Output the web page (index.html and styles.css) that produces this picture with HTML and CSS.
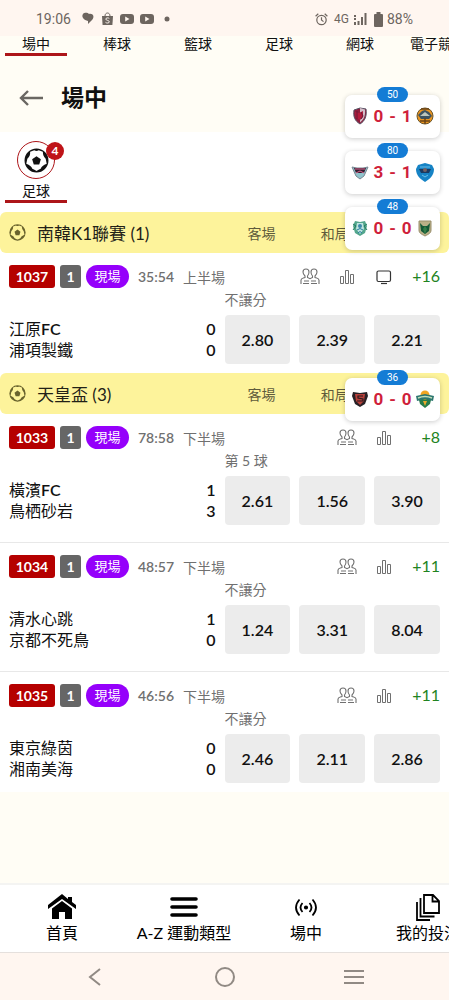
FILE: index.html
```html
<!DOCTYPE html>
<html lang="zh-Hant">
<head>
    <meta charset="UTF-8">
    <meta name="viewport" content="width=device-width, initial-scale=1">
    <title>場中</title>
    <link rel="stylesheet" href="styles.css">
</head>
<body>
    <svg class="sprite" aria-hidden="true">
        <symbol id="ball" viewBox="0 0 24 24">
            <path fill-rule="evenodd" d="M12 .5a11.500 11.500 0 1 0 0 23a11.500 11.500 0 1 0 0-23zM12 22q-2-1-4-2-1-3-5.800-4.800l1-5q3-2 2.700-6.500l4-1.500q2 1.500 4.200 0l4 1.500q0 4.500 2.700 6.500l1 5Q17 17 16 20q-2 1-4 2z" fill="currentColor"/>
            <path d="M12 7.800l4.200 3-1.600 5H9.400l-1.600-5z" fill="currentColor"/>
        </symbol>
        <symbol id="people" viewBox="0 0 20 17">
            <g fill="none" stroke="currentColor" stroke-width="1.1">
                <path d="M1 16v-4c0-1.500 1.500-1.700 4-2.500V8C3.500 6.500 3 5 3 4c0-4 6-4 6 0 0 1-.2 2.500-1.500 4v1.500L10 10.700l2.500-1.200V8C11.200 6.500 11 5 11 4c0-4 6-4 6 0 0 1-.5 2.500-2 4v1.500c2.500.8 4 1 4 2.500v4"/>
                <path d="M4 13h5M11 13h5M3 15.500h6M11 15.500h6"/>
            </g>
        </symbol>
        <symbol id="bars" viewBox="0 0 16 16">
            <path d="M1.500 7.500h3v7h-3zM6.500 1.500h3v13h-3zM11.500 5.500h3v9h-3z" fill="none" stroke="currentColor" stroke-width="1"/>
        </symbol>
        <symbol id="tv" viewBox="0 0 16 16">
            <rect x="1" y="2" width="13.500" height="10.500" rx="1.500" fill="none" stroke="currentColor" stroke-width="1.2"/>
            <path d="M5 14.500h6" stroke="currentColor" stroke-width="1.200"/>
        </symbol>
        <symbol id="youtube" viewBox="0 0 14 12">
            <rect y="1" width="14" height="10" rx="3" fill="#6d655f"/>
            <path d="M5.200 3.500v5L9.500 6z" fill="#fff6f0"/>
        </symbol>
    </svg>

    <div class="app">
        <div class="status-bar">
            <div class="status-group">
                <span class="clock">19:06</span>
                <svg width="14" height="14" viewBox="0 0 14 14" fill="#6d655f"><path d="M2 2c2-2 5-1 6 0 4-1 6 3 3 6l-4 4 0-3C3 8 0 5 2 2z"/></svg>
                <svg width="13" height="14" viewBox="0 0 13 14"><path d="M1 4h11l-.6 9H1.600z" fill="#6d655f"/><path d="M4 4c0-4 5-4 5 0" fill="none" stroke="#6d655f"/><path d="M8.300 6.500c-1-1-3.500-.8-3.500.6 0 1.600 3.500 1 3.500 2.700 0 1.500-2.700 1.600-3.800.5" fill="none" stroke="#fff6f0"/></svg>
                <svg width="14" height="12"><use href="#youtube"/></svg>
                <svg width="14" height="12"><use href="#youtube"/></svg>
                <svg width="13" height="6" viewBox="0 0 13 6"><circle cx="7" cy="3" r="2.500" fill="#6d655f"/></svg>
            </div>
            <div class="status-group status-right">
                <svg width="13" height="13" viewBox="0 0 13 13" fill="none" stroke="#6d655f" stroke-width="1.200"><circle cx="6.500" cy="7" r="4.700"/><path d="M6.500 4.200V7l2 1.600M.6 3.200L3.300.8M12.400 3.200L9.700.8"/></svg>
                <span class="network">4G</span>
                <svg class="signal" width="14" height="12" viewBox="0 0 14 12" fill="#6d655f"><path d="M1 2h2v2H1zM1 5h2v2H1zM1 9h2v3H1zM4.500 8h2v4h-2zM8 4h2v8H8zM11.500 0h2v12h-2z"/></svg>
                <svg width="9" height="15" viewBox="0 0 9 15" fill="#6d655f"><path d="M2.500 0h4v2H8q1 0 1 1v11q0 1-1 1H1q-1 0-1-1V3q0-1 1-1h1.500z"/></svg>
                <span class="battery">88%</span>
            </div>
        </div>

        <nav class="sport-tabs">
            <a href="#" class="sport-tab active">場中</a>
            <a href="#" class="sport-tab">棒球</a>
            <a href="#" class="sport-tab">籃球</a>
            <a href="#" class="sport-tab">足球</a>
            <a href="#" class="sport-tab">網球</a>
            <a href="#" class="sport-tab long">電子競技</a>
        </nav>

        <header class="page-header">
            <button class="back-button" aria-label="返回">
                <svg width="24" height="16" viewBox="0 0 24 16" fill="none" stroke="#6a6762" stroke-width="2.400"><path d="M9 1L2 8l7 7M2 8h22"/></svg>
            </button>
            <h1>場中</h1>
        </header>

        <main>
            <div class="filter-bar">
                <a href="#" class="filter-item">
                    <span class="filter-icon">
                        <svg width="25" height="25"><use href="#ball"/></svg>
                        <span class="filter-badge">4</span>
                    </span>
                    <span>足球</span>
                </a>
            </div>

            <section class="league">
                <div class="league-header">
                    <h2><svg width="17" height="17"><use href="#ball"/></svg>南韓K1聯賽 (1)</h2>
                    <div class="league-columns"><span>客場</span><span>和局</span></div>
                </div>
                <article class="match">
                    <div class="match-info">
                        <span class="code">1037</span>
                        <span class="code count">1</span>
                        <span class="live">現場</span>
                        <span class="time">35:54</span>
                        <span class="half">上半場</span>
                        <div class="match-tools">
                            <button aria-label="對戰"><svg width="20" height="17"><use href="#people"/></svg></button>
                            <button aria-label="統計"><svg width="16" height="16"><use href="#bars"/></svg></button>
                            <button class="tv" aria-label="直播"><svg width="16" height="16"><use href="#tv"/></svg></button>
                            <a href="#" class="more">+16</a>
                        </div>
                    </div>
                    <div class="market">不讓分</div>
                    <div class="match-body">
                        <div class="teams">
                            <div class="team"><span>江原<b>FC</b></span><b>0</b></div>
                            <div class="team"><span>浦項製鐵</span><b>0</b></div>
                        </div>
                        <div class="odds"><button>2.80</button><button>2.39</button><button>2.21</button></div>
                    </div>
                </article>
            </section>

            <section class="league">
                <div class="league-header">
                    <h2><svg width="17" height="17"><use href="#ball"/></svg>天皇盃 (3)</h2>
                    <div class="league-columns"><span>客場</span><span>和局</span></div>
                </div>
                <article class="match">
                    <div class="match-info">
                        <span class="code">1033</span>
                        <span class="code count">1</span>
                        <span class="live">現場</span>
                        <span class="time">78:58</span>
                        <span class="half">下半場</span>
                        <div class="match-tools">
                            <button aria-label="對戰"><svg width="20" height="17"><use href="#people"/></svg></button>
                            <button aria-label="統計"><svg width="16" height="16"><use href="#bars"/></svg></button>
                            <a href="#" class="more">+8</a>
                        </div>
                    </div>
                    <div class="market">第 5 球</div>
                    <div class="match-body">
                        <div class="teams">
                            <div class="team"><span>橫濱<b>FC</b></span><b>1</b></div>
                            <div class="team"><span>鳥栖砂岩</span><b>3</b></div>
                        </div>
                        <div class="odds"><button>2.61</button><button>1.56</button><button>3.90</button></div>
                    </div>
                </article>
                <article class="match">
                    <div class="match-info">
                        <span class="code">1034</span>
                        <span class="code count">1</span>
                        <span class="live">現場</span>
                        <span class="time">48:57</span>
                        <span class="half">下半場</span>
                        <div class="match-tools">
                            <button aria-label="對戰"><svg width="20" height="17"><use href="#people"/></svg></button>
                            <button aria-label="統計"><svg width="16" height="16"><use href="#bars"/></svg></button>
                            <a href="#" class="more">+11</a>
                        </div>
                    </div>
                    <div class="market">不讓分</div>
                    <div class="match-body">
                        <div class="teams">
                            <div class="team"><span>清水心跳</span><b>1</b></div>
                            <div class="team"><span>京都不死鳥</span><b>0</b></div>
                        </div>
                        <div class="odds"><button>1.24</button><button>3.31</button><button>8.04</button></div>
                    </div>
                </article>
                <article class="match">
                    <div class="match-info">
                        <span class="code">1035</span>
                        <span class="code count">1</span>
                        <span class="live">現場</span>
                        <span class="time">46:56</span>
                        <span class="half">下半場</span>
                        <div class="match-tools">
                            <button aria-label="對戰"><svg width="20" height="17"><use href="#people"/></svg></button>
                            <button aria-label="統計"><svg width="16" height="16"><use href="#bars"/></svg></button>
                            <a href="#" class="more">+11</a>
                        </div>
                    </div>
                    <div class="market">不讓分</div>
                    <div class="match-body">
                        <div class="teams">
                            <div class="team"><span>東京綠茵</span><b>0</b></div>
                            <div class="team"><span>湘南美海</span><b>0</b></div>
                        </div>
                        <div class="odds"><button>2.46</button><button>2.11</button><button>2.86</button></div>
                    </div>
                </article>
            </section>
        </main>

        <nav class="bottom-nav">
            <a href="#">
                <svg width="28" height="26" viewBox="0 0 28 26"><path d="M14 0L0 11v4l14-10 14 10v-4l-4-3V3h-4v2z"/><path d="M14 7L4 14.500V25h7v-7h6v7h7V14.500z"/></svg>
                <span>首頁</span>
            </a>
            <a href="#">
                <svg width="28" height="26" viewBox="0 0 28 26" stroke="#000" stroke-width="3.600" stroke-linecap="round"><path d="M2 5h24M2 13h24M2 21h24"/></svg>
                <span>A-Z 運動類型</span>
            </a>
            <a href="#">
                <svg width="28" height="26" viewBox="0 0 28 26" fill="none" stroke="#000" stroke-width="1.800"><circle cx="14" cy="13.500" r="1.200" fill="#000"/><path d="M10.500 9q-4 4.500 0 9M17.500 9q4 4.500 0 9M7.500 5.500q-7 8 0 16M20.500 5.500q7 8 0 16"/></svg>
                <span>場中</span>
            </a>
            <a href="#">
                <svg width="28" height="28" viewBox="0 0 28 28" fill="none" stroke="#000" stroke-width="1.800"><path d="M10 2h9l6 6v12H10zM18.500 2v6.500H25M6.500 5v18.500h14M3 9v18h13"/></svg>
                <span>我的投注</span>
            </a>
        </nav>

        <div class="system-nav">
            <button aria-label="返回"><svg width="24" height="20" viewBox="0 0 24 20" fill="none" stroke="#918a84" stroke-width="2"><path d="M16 2l-10 8 10 8"/></svg></button>
            <button aria-label="主畫面"><svg width="20" height="20" viewBox="0 0 20 20" fill="none" stroke="#918a84" stroke-width="2"><circle cx="10" cy="10" r="9"/></svg></button>
            <button aria-label="最近使用"><svg width="20" height="18" viewBox="0 0 20 18" stroke="#918a84" stroke-width="2"><path d="M0 3h20M0 9h20M0 15h20"/></svg></button>
        </div>

        <!-- 浮動比分 -->
        <aside class="score-overlay">
            <div class="score-card">
                <span class="minute">50</span>
                <svg width="18" height="18" viewBox="0 0 18 18"><path d="M3 3l6-2 6 1c1 7-1 12-6 15C4 14 2 10 3 3z" fill="#8e1e3d" stroke="#555365"/><path d="M9 1l5 1.500c.5 6-1 10-5 13z" fill="#d2bec9"/><path d="M4 5l4 1 4-2v6l-3 3-4-2z" fill="#b51c3c"/><path d="M6 4v8M10 5l2 4-2 3" stroke="#6b1837" fill="none"/></svg>
                <span class="score"><b>0</b><b>-</b><b>1</b></span>
                <svg width="18" height="18" viewBox="0 0 18 18"><circle cx="9" cy="9" r="8" fill="#ec951f" stroke="#67552e"/><path d="M2 8l4-4 3-1 4 2 3 4-3 3H5z" fill="#3e5360"/><path d="M4 9l5-4 5 4z" fill="#bdc6bd"/><path d="M4 14h10M9 11v6M5 2l8 0" stroke="#694418" stroke-width="1.500"/></svg>
            </div>
            <div class="score-card">
                <span class="minute">80</span>
                <svg width="18" height="18" viewBox="0 0 18 18"><path d="M1 4l5 1h6l5-1-4 9-4 3-4-3z" fill="#8fc4cc" stroke="#7a8692"/><path d="M3 5h12l-2 5H5z" fill="#341c30"/><path d="M4 6h10M5 10l4-2 4 2" stroke="#df6b91" fill="none"/></svg>
                <span class="score"><b>3</b><b>-</b><b>1</b></span>
                <svg width="18" height="19" viewBox="0 0 18 19"><path d="M2 2l7-2 7 2 2 4c0 6-4 10-9 13C4 16 0 12 0 6z" fill="#1683c5"/><path d="M3 6h12l-2 4H5z" fill="#193a61"/><path d="M4 4h10M6 12l3 2 3-2" fill="none" stroke="#69bee9"/><circle cx="9" cy="7" r="2" fill="#735f62"/></svg>
            </div>
            <div class="score-card">
                <span class="minute">48</span>
                <svg width="18" height="18" viewBox="0 0 18 18"><path d="M4 2l5 1 5-1 2 5-2 7-5 3-5-3-2-7z" fill="#53a68c"/><path d="M6 4h6l1 6-4 5-4-5z" fill="#bfe5df"/><path d="M2 5l3 2-3 4M16 5l-3 2 3 4" stroke="#237c60" fill="none"/><circle cx="9" cy="7" r="2" fill="#3d88aa"/><path d="M6 11q3-3 6 0M7 14q2-3 4 0" stroke="#247ba0" fill="none"/></svg>
                <span class="score"><b>0</b><b>-</b><b>0</b></span>
                <svg width="18" height="18" viewBox="0 0 18 18"><path d="M3 2h12v9c0 3-2 4-6 6-4-2-6-3-6-6z" fill="#bab087" stroke="#998f6d"/><path d="M4 4l3 3h4l3-3-1 8-4 3-4-3z" fill="#155a37"/><path d="M7 10l2-3 2 3-2 5z" fill="#347e49"/></svg>
            </div>
            <div class="score-card apart">
                <span class="minute">36</span>
                <svg width="18" height="18" viewBox="0 0 18 18"><path d="M2 2l7 1 7-1 1 4-3 8-5 3-5-3L1 6z" fill="#282025"/><path d="M4 4h10l-1 7-4 4-4-4z" fill="#b8403a"/><path d="M12 6H7v2l5 1v2H6" fill="none" stroke="#28191e" stroke-width="1.200"/></svg>
                <span class="score"><b>0</b><b>-</b><b>0</b></span>
                <svg width="18" height="18" viewBox="0 0 18 18"><path d="M2 6h14l-2 8-5 4-5-4z" fill="#277b4a"/><circle cx="9" cy="5" r="4.500" fill="#f1a622"/><path d="M0 6l9-2 9 2-1 5-8-2-8 2z" fill="#2c7670"/><path d="M2 8q7-3 14 0" stroke="#c2ddb8" stroke-width="1.500" fill="none"/><path d="M7 11h4l-2 5z" fill="#e9a92b"/></svg>
            </div>
        </aside>
    </div>
</body>
</html>
```

FILE: styles.css
```css
* {
    box-sizing: border-box;
}

body {
    margin: 0;
    font-family: Lato, "Noto Sans CJK TC", sans-serif;
    font-size: 14px;
    color: #111;
    background: #fffdf5;
}

a {
    color: inherit;
    text-decoration: none;
}

button {
    padding: 0;
    border: 0;
    background: none;
    font: inherit;
    color: inherit;
}

svg {
    display: block;
    flex-shrink: 0;
}

.sprite {
    position: absolute;
    width: 0;
    height: 0;
}

.app {
    position: relative;
    display: flex;
    flex-direction: column;
    min-height: 100vh;
    overflow: hidden;
}

/* 狀態列 */
.status-bar {
    display: flex;
    justify-content: space-between;
    align-items: center;
    height: 36px;
    padding: 2px 36px 0;
    background: #fff6f0;
    color: #6d655f;
    font-family: Roboto, sans-serif;
}

.status-group {
    display: flex;
    align-items: center;
    gap: 6px;
}

.status-right {
    gap: 4px;
}

.clock,
.battery {
    font-size: 14px;
}

.clock {
    margin-right: 4px;
}

.network {
    margin-left: 2px;
    font-size: 12px;
}

.signal {
    margin-right: 3px;
}

/* 運動分頁 */
.sport-tabs {
    display: flex;
    gap: 19px;
    padding: 0 5px;
    line-height: 16px;
}

.sport-tab {
    flex: 0 0 62px;
    height: 20px;
    text-align: center;
    white-space: nowrap;
}

.sport-tab.active {
    border-bottom: 3px solid #ad1519;
}

.sport-tab.long {
    text-align: left;
}

.page-header {
    display: flex;
    align-items: center;
    gap: 18px;
    height: 76px;
    padding: 8px 19px 0;
}

.page-header h1 {
    margin: 0;
    font-size: 23px;
    line-height: 30px;
    padding-bottom: 2px;
}

main {
    flex: 1;
}

.filter-bar {
    display: flex;
    height: 80px;
    padding: 9px 5px;
    background: #fff;
}

.filter-item {
    display: flex;
    flex-direction: column;
    align-items: center;
    gap: 3px;
    width: 62px;
    height: 62px;
    border-bottom: 3px solid #ad1519;
    line-height: 18px;
}

.filter-icon {
    position: relative;
    display: flex;
    align-items: center;
    justify-content: center;
    width: 38px;
    height: 38px;
    border: 1px solid #ad1519;
    border-radius: 50%;
}

.filter-badge {
    position: absolute;
    top: 0;
    right: -10px;
    width: 18px;
    height: 18px;
    border-radius: 50%;
    background: #bf1418;
    color: #fff;
    font-size: 12px;
    font-weight: 700;
    text-align: center;
}

/* 聯賽 */
.league {
    background: #fff;
}

.league-header {
    display: flex;
    align-items: center;
    height: 41px;
    padding: 0 9px;
    border-radius: 6px;
    background: #fdf39b;
    color: #5f5b3c;
}

.league-header h2 {
    display: flex;
    align-items: center;
    gap: 11px;
    flex: 1;
    margin: 0;
    font-size: 17px;
    font-weight: 400;
    color: #222117;
    white-space: nowrap;
}

.league-header h2 svg {
    color: #69632d;
}

.league-columns {
    display: grid;
    grid-template-columns: repeat(3, 1fr);
    gap: 9px;
    width: 50%;
    padding-left: 5px;
    text-align: center;
}

.match {
    padding: 12px 9px 9px;
}

.match:not(:last-child) {
    padding-bottom: 17px;
    border-bottom: 1px solid #e8e8e8;
}

.match-info {
    display: flex;
    align-items: center;
    height: 23px;
    color: #707070;
}

.code,
.live {
    height: 23px;
    line-height: 23px;
    color: #fff;
    text-align: center;
}

.code {
    width: 46px;
    margin-right: 5px;
    border-radius: 3px;
    background: #b50000;
    font-weight: 700;
}

.code.count {
    width: 21px;
    background: #666;
}

.live {
    width: 43px;
    border-radius: 12px;
    background: #9500fb;
    font-size: 13px;
}

.time {
    margin: 0 9px;
    font-weight: 600;
}

.match-tools {
    display: flex;
    align-items: center;
    margin-left: auto;
}

.match-tools button {
    display: flex;
    justify-content: center;
    width: 37px;
}

.match-tools .tv {
    color: #333;
}

.more {
    width: 38px;
    color: #218321;
    font-size: 16px;
    line-height: 21px;
    padding-bottom: 2px;
    text-align: right;
}

.market {
    margin-left: 50%;
    padding-bottom: 1px;
    line-height: 24px;
    color: #707070;
}

.match-body {
    display: flex;
    align-items: center;
    padding-top: 2px;
    font-size: 16px;
}

.teams {
    flex: 1;
    padding: 0 9px 2px 0;
    line-height: 21px;
}

.teams b {
    font-weight: 600;
}

.team {
    display: flex;
    justify-content: space-between;
}

.odds {
    display: grid;
    grid-template-columns: repeat(3, 1fr);
    gap: 9px;
    width: 50%;
}

.odds button {
    height: 49px;
    border-radius: 4px;
    background: #ececec;
    font-weight: 600;
}

/* 底部導覽 */
.bottom-nav {
    display: flex;
    height: 70px;
    padding: 8px 1px 0;
    border-top: 2px solid #f4f4f2;
    border-bottom: 1px solid #e5e0dd;
    background: #fff;
}

.bottom-nav a {
    display: flex;
    flex: 0 0 122px;
    flex-direction: column;
    align-items: center;
    font-size: 16px;
    line-height: 24px;
    color: #000;
    white-space: nowrap;
}

.bottom-nav svg {
    height: 28px;
}

.system-nav {
    display: flex;
    align-items: center;
    justify-content: center;
    height: 47px;
    background: #fff6f0;
}

.system-nav button {
    display: flex;
    justify-content: center;
    width: 129px;
}

/* 浮動比分 */
.score-overlay {
    position: absolute;
    top: 95px;
    right: 9px;
    display: flex;
    flex-direction: column;
    gap: 13px;
    font-family: Roboto, sans-serif;
}

.score-card {
    position: relative;
    display: flex;
    align-items: center;
    justify-content: space-between;
    width: 95px;
    height: 43px;
    padding: 0 6px 1px;
    border-radius: 7px;
    background: #fff;
    box-shadow: 0 1px 5px rgba(0, 0, 0, 0.2);
}

.score-card.apart {
    margin-top: 115px;
}

.minute {
    position: absolute;
    top: -8px;
    left: 32px;
    width: 31px;
    height: 15px;
    border-radius: 8px;
    background: #147cd5;
    color: #fff;
    font-size: 10px;
    line-height: 15px;
    text-align: center;
}

.score {
    display: flex;
    gap: 6px;
    color: #cf1f3b;
    font-size: 17px;
}
```
